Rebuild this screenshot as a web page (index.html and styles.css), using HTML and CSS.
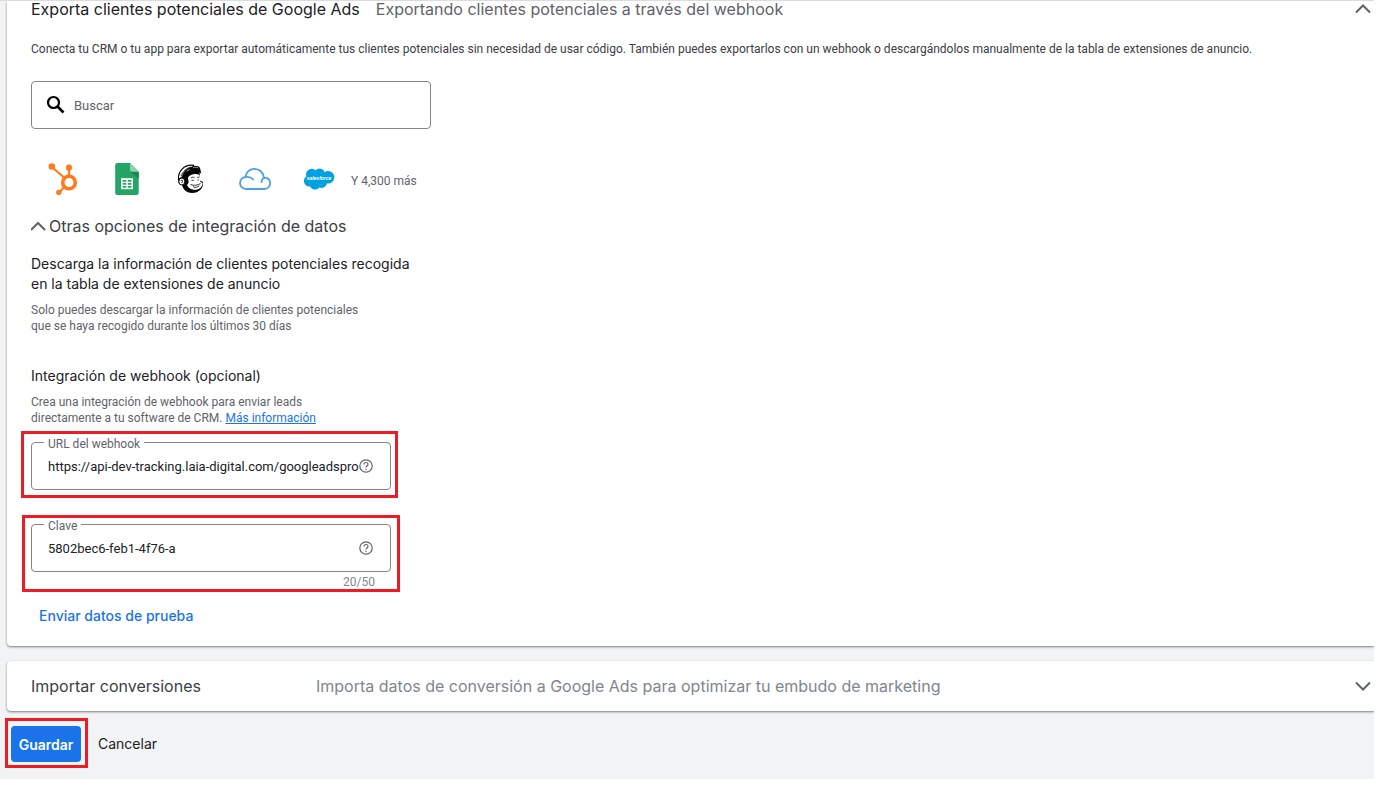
FILE: index.html
```html
<!DOCTYPE html>
<html lang="es">
<head>
    <meta charset="UTF-8">
    <meta name="viewport" content="width=device-width, initial-scale=1.0">
    <title>Google Ads - Clientes potenciales</title>
    <link rel="stylesheet" href="styles.css">
</head>
<body>
    <main class="page">
        <!-- Export leads -->
        <section class="card export-card">
            <header class="card-header">
                <h2 class="card-title">Exporta clientes potenciales de Google Ads</h2>
                <span class="card-subtitle">Exportando clientes potenciales a través del webhook</span>
                <button class="toggle-btn" type="button" aria-label="Contraer">
                    <svg width="16" height="10" viewBox="0 0 16 10"><path d="M1 8.5 8 1.5 15 8.5" fill="none" stroke="#5f6368" stroke-width="2"/></svg>
                </button>
            </header>

            <p class="intro">Conecta tu CRM o tu app para exportar automáticamente tus clientes potenciales sin necesidad de usar código. También puedes exportarlos con un webhook o descargándolos manualmente de la tabla de extensiones de anuncio.</p>

            <label class="search-box">
                <svg width="20" height="20" viewBox="0 0 20 20"><circle cx="7.5" cy="7.5" r="5.5" fill="none" stroke="#000" stroke-width="2.2"/><path d="m11.5 11.5 6 6" stroke="#000" stroke-width="2.6"/></svg>
                <input class="search-input" type="text" placeholder="Buscar" aria-label="Buscar">
            </label>

            <!-- Integrations -->
            <div class="apps">
                <!-- HubSpot -->
                <svg width="32" height="32" viewBox="0 0 32 32" fill="none" stroke="#ff7a1f">
                    <circle cx="22" cy="19.5" r="6.3" stroke-width="3.6"/>
                    <path d="M22 13V4M17.5 15 5 4M17 24.5l-5 5" stroke-width="2.2"/>
                    <g fill="#ff7a1f" stroke="none"><circle cx="4.8" cy="3.5" r="3.3"/><circle cx="22" cy="4.7" r="3.1"/><circle cx="11.8" cy="29.5" r="2.7"/></g>
                </svg>
                <!-- Sheets -->
                <svg width="32" height="32" viewBox="0 0 32 32">
                    <path d="M6.200 0H19l8.700 8.700V30a2 2 0 0 1-2 2H6.200a2 2 0 0 1-2-2V2a2 2 0 0 1 2-2z" fill="#23a566"/>
                    <path d="m19 8.700 8.700 7v-7z" fill="#1b8752"/>
                    <path d="M19 0v6.700a2 2 0 0 0 2 2h6.700z" fill="#8ed1b1"/>
                    <path d="M10 15.200h12v11H10z" fill="#fff"/>
                    <path d="M11.700 17h3.600v1.800h-3.600zM16.800 17h3.600v1.800h-3.600zM11.700 20h3.600v1.800h-3.600zM16.800 20h3.600v1.800h-3.600zM11.700 23h3.600v1.700h-3.600zM16.800 23h3.600v1.700h-3.600z" fill="#23a566"/>
                </svg>
                <!-- Mailchimp -->
                <svg width="32" height="32" viewBox="0 0 32 32">
                    <path d="M7 14 10 9l7-3 7-1 1 9-1 3 4 2c1 6-4 11-11 11-6 0-9-4-10-8-5-1-5-6-1-8z" fill="#050505"/>
                    <path d="M3.500 16.500C3 8 9 2 17 2.200c2-.4 2 1.200 1.200 2C14 5 9 8 7.300 14z" fill="#fff" stroke="#050505" stroke-width="1.200"/>
                    <path d="M6 13C8 8 12 5 16 4" fill="none" stroke="#050505" stroke-width=".8"/>
                    <path d="M17 3.500C20 2 24 2.500 25 5l1.300 5.500C22 8.500 17 8.500 12.500 11c1-3 2-6 4.500-7.500z" fill="#050505"/>
                    <path d="M18 4.800c2-1 4-.8 5.500.3" fill="none" stroke="#fff" stroke-width=".6"/>
                    <ellipse cx="6.800" cy="18.500" rx="3" ry="3.500" fill="#fff" stroke="#050505"/>
                    <path d="M6 18c0-1.500 2-1 1.500.3L6.600 20" fill="none" stroke="#050505" stroke-width=".9"/>
                    <path d="M15 12.500c3-2 7-2 9.500-.5l.7 5c-1 1.300 1.300 2.500 2.500 3-.2 4-3.700 6.800-7.700 6.800-4.300 0-7.200-2.300-8-5 2.200-1.200 1.700-3.800 1-5.500-.3-1.500.3-3 2-3.800z" fill="#fff"/>
                    <path d="M16 14.800c1.200-.8 2.500-.8 3.500-.2M22.200 14.400l1.800-.2M16.500 17.300h2.300M22.500 17h1.300M15.500 21.500c3.500 1.500 7 .8 10-1M18 23.700c2.500 1.300 4.500.4 6.300-.9" fill="none" stroke="#050505" stroke-width=".8"/>
                </svg>
                <!-- Cloud -->
                <svg width="32" height="32" viewBox="0 0 32 32" fill="none" stroke="#4a9fe8" stroke-width="1.800" stroke-linecap="round">
                    <path d="M22.500 19.200c0-3.400 2.300-4.600 4-4.400 2.700.3 4.600 2.400 4.600 5.200 0 3.300-2.300 6-5.700 6H7.200C3.500 26 1 23.300 1 20c0-3.200 2.400-5.700 5.400-6 .6-4.900 4.300-8.200 9-8.200 5 0 9 3.600 9.400 8.900M6.400 14c3.300-.3 5.800.4 7.800 2.500"/>
                </svg>
                <!-- Salesforce -->
                <svg width="32" height="32" viewBox="0 0 32 32">
                    <g fill="#00a1e0"><circle cx="8.800" cy="11.500" r="5.800"/><circle cx="16.600" cy="10.700" r="5.200"/><circle cx="25" cy="14.200" r="6.300"/><circle cx="6.500" cy="18" r="5.600"/><circle cx="12" cy="21" r="5.500"/><circle cx="18.600" cy="19.500" r="5.400"/><path d="M8 10h15v10H8z"/></g>
                    <text class="salesforce-text" x="16" y="17" text-anchor="middle">salesforce</text>
                </svg>
                <span class="apps-more">Y 4,300 más</span>
            </div>

            <button class="options-toggle" type="button">
                <svg width="16" height="10" viewBox="0 0 16 10"><path d="M0 9 7 2 14 9" fill="none" stroke="#5f6368" stroke-width="2"/></svg>
                Otras opciones de integración de datos
            </button>

            <div class="option">
                <h3 class="option-title">Descarga la información de clientes potenciales recogida<br>en la tabla de extensiones de anuncio</h3>
                <p class="option-text">Solo puedes descargar la información de clientes potenciales<br>que se haya recogido durante los últimos 30 días</p>
            </div>

            <div class="option webhook">
                <h3 class="option-title">Integración de webhook (opcional)</h3>
                <p class="option-text">Crea una integración de webhook para enviar leads<br>directamente a tu software de CRM. <a href="#">Más información</a></p>

                <div class="highlight">
                    <div class="field">
                        <label class="field-label" for="webhook-url">URL del webhook</label>
                        <input class="field-input" id="webhook-url" type="text" value="https://api-dev-tracking.laia-digital.com/googleadspro">
                        <svg class="help" width="14" height="14" viewBox="0 0 14 14"><circle cx="7" cy="7" r="6.200"/><path d="M5 5.500c0-2.700 4-2.600 4-.1C9 7 7 7 7 8.600M7 9.700v1.200"/></svg>
                    </div>
                </div>

                <div class="highlight highlight-key">
                    <div class="field">
                        <label class="field-label" for="webhook-key">Clave</label>
                        <input class="field-input" id="webhook-key" type="text" value="5802bec6-feb1-4f76-a">
                        <svg class="help" width="14" height="14" viewBox="0 0 14 14"><circle cx="7" cy="7" r="6.200"/><path d="M5 5.500c0-2.700 4-2.600 4-.1C9 7 7 7 7 8.600M7 9.700v1.200"/></svg>
                    </div>
                    <div class="counter">20/50</div>
                </div>
            </div>

            <button class="test-btn" type="button">Enviar datos de prueba</button>
        </section>

        <!-- Import conversions -->
        <section class="card import-card">
            <h2 class="import-title">Importar conversiones</h2>
            <span class="import-text">Importa datos de conversión a Google Ads para optimizar tu embudo de marketing</span>
            <button class="toggle-btn" type="button" aria-label="Expandir">
                <svg width="16" height="10" viewBox="0 0 16 10"><path d="m1 1.500 7 7 7-7" fill="none" stroke="#5f6368" stroke-width="2"/></svg>
            </button>
        </section>

        <div class="actions">
            <div class="highlight-save">
                <button class="save-btn" type="button">Guardar</button>
            </div>
            <button class="cancel-btn" type="button">Cancelar</button>
        </div>
    </main>
</body>
</html>
```
FILE: styles.css
```css
* {
    box-sizing: border-box;
}

body {
    margin: 0;
    padding-right: 23px;
    background: #fff;
    color: #202124;
    font-family: Roboto, sans-serif;
    font-size: 12px;
    line-height: 16px;
}

h2, h3, p {
    margin: 0;
    font-weight: normal;
}

svg {
    display: block;
    flex-shrink: 0;
}

button {
    padding: 0;
    border: none;
    background: none;
    color: inherit;
    font-family: Inter, sans-serif;
    cursor: pointer;
}

.page {
    padding: 0 0 11px 7px;
    border-top: 1px solid #dadce0;
    background: #f1f3f4;
    overflow: hidden;
}

.card {
    background: #fff;
    border-radius: 4px 0 0 4px;
    box-shadow: 0 1px 2px rgba(60, 64, 67, 0.5), 0 1px 3px rgba(60, 64, 67, 0.2);
}

.export-card {
    padding: 0 3px 20px 24px;
    border-top-left-radius: 0;
}

.card-header {
    display: flex;
    align-items: center;
    gap: 16px;
    font-family: Inter, sans-serif;
}

.card-title,
.card-subtitle {
    font-size: 16px;
    line-height: 16px;
}

.card-subtitle {
    color: #5f6368;
}

.toggle-btn {
    margin-left: auto;
}

.intro {
    margin-top: 24px;
    color: #3c4043;
}

.search-box {
    display: flex;
    align-items: center;
    gap: 8px;
    max-width: 400px;
    height: 48px;
    margin-top: 24px;
    padding: 0 14px;
    border: 1px solid #80868b;
    border-radius: 4px;
}

.search-input {
    flex: 1;
    padding: 0;
    border: none;
    outline: none;
    font-family: inherit;
    font-size: 13px;
}

.search-input::placeholder {
    color: #5f6368;
}

.apps {
    display: flex;
    align-items: center;
    gap: 32px;
    margin-top: 34px;
    padding-left: 16px;
}

.apps-more {
    margin-left: -16px;
    padding-top: 4px;
    color: #5f6368;
}

.salesforce-text {
    fill: #fff;
    font: italic bold 5px "Liberation Sans", sans-serif;
}

.options-toggle {
    display: flex;
    align-items: center;
    gap: 2px;
    margin-top: 23px;
    color: #3c4043;
    font-size: 16px;
    line-height: 16px;
}

.option {
    margin-top: 20px;
}

.webhook {
    margin-top: 32px;
}

.option-title {
    font-family: Inter, sans-serif;
    font-size: 14px;
    line-height: 20px;
}

.option-text {
    margin-top: 8px;
    color: #5f6368;
}

.option-text a {
    color: #1a73e8;
}

/* red frames around the steps to follow */
.highlight {
    max-width: 377px;
    margin: 5px 0 0 -10px;
    padding: 8px 4px 5px 7px;
    border: 3px solid #ed1c24;
}

.highlight-key {
    max-width: 378px;
    margin: 17px 0 0 -9px;
    padding: 6px 6px 0;
}

.field {
    position: relative;
    display: flex;
    align-items: center;
    height: 48px;
    padding: 0 17px 0 16px;
    border: 1px solid #80868b;
    border-radius: 4px;
}

.field-label {
    position: absolute;
    top: -5px;
    left: 12px;
    padding: 0 4px;
    background: #fff;
    color: #5f6368;
    line-height: 12px;
}

.field-input {
    flex: 1;
    min-width: 0;
    padding: 0;
    border: none;
    outline: none;
    background: none;
    color: #202124;
    font-family: inherit;
    font-size: 13px;
}

.help {
    fill: none;
    stroke: #5f6368;
    stroke-width: 1.2;
}

.counter {
    padding: 4px 16px 0 0;
    color: #80868b;
    line-height: 13px;
    text-align: right;
}

.test-btn {
    display: block;
    margin: 14px 0 0 8px;
    color: #1a73e8;
    font-size: 14px;
    font-weight: 500;
    line-height: 20px;
}

.import-card {
    display: flex;
    align-items: center;
    margin-top: 15px;
    padding: 17px 3px 17px 24px;
    font-family: Inter, sans-serif;
    font-size: 16px;
}

.import-title {
    flex: 0 0 285px;
    color: #3c4043;
    font-size: 16px;
}

.import-text {
    color: #80868b;
}

.actions {
    display: flex;
    align-items: center;
    gap: 10px;
    margin: 7px 0 0 -2px;
}

.highlight-save {
    padding: 5px 4px 3px 3px;
    border: 3px solid #ed1c24;
}

.save-btn {
    min-width: 70px;
    height: 36px;
    padding: 0 6px;
    border-radius: 4px;
    background: #1a73e8;
    color: #fff;
    font-size: 14px;
    font-weight: 600;
}

.cancel-btn {
    font-size: 14px;
}
```
